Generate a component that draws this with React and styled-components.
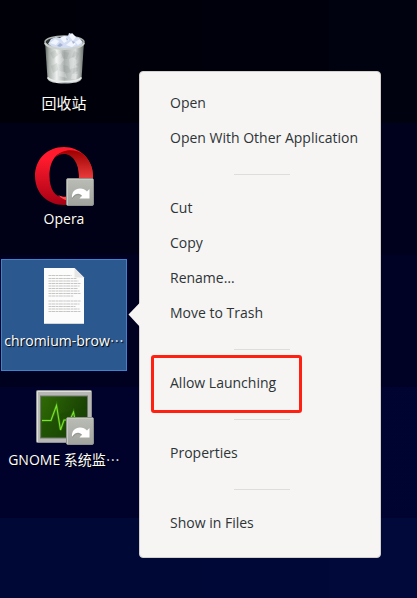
import React from "react";
import styled, { createGlobalStyle, css } from "styled-components";

const GlobalStyle = createGlobalStyle`
  *, *::before, *::after { box-sizing: border-box; }
  body { margin: 0; background: #000019; }
  button { font: inherit; }
`;

const Desktop = styled.main`
  position: relative;
  min-height: 100vh;
  padding: 21px 1px;
  font-family: "Open Sans", "Noto Sans CJK SC", sans-serif;
  font-size: 14px;
  line-height: 22px;
  background:
    linear-gradient(90deg, transparent 76px, #00004008 76px, #00004008 202px, #0000600c 202px, #0000600c 329px, #00146018 329px),
    linear-gradient(180deg, #000008 123px, #000016 123px, #000016 255px, #00001f 255px, #00001f 387px, #00022b 387px, #00022b 518px, #000835 518px);
`;

const IconColumn = styled.div`
  display: flex;
  flex-direction: column;
  gap: 7px;
  width: 126px;
`;

const Launcher = styled.button`
  display: flex;
  flex-direction: column;
  align-items: center;
  gap: ${(p) => (p.$tight ? 0 : 2)}px;
  height: 112px;
  padding: ${(p) => (p.$tight ? 3 : 4)}px 0 4px;
  border: 1px solid transparent;
  background: transparent;
  color: #fff;
  font-size: ${(p) => (p.$large ? 15 : 14)}px;
  text-shadow: 1px 1px 1px #000;
  white-space: nowrap;
  ${(p) =>
    p.$selected &&
    css`
      border-color: #3f82d0;
      background: #2c5890;
    `}
`;

const Art = styled.svg`
  display: block;
  flex: none;
  width: 64px;
  height: 64px;
`;

const Dots = styled.span`
  display: inline-block;
  font-family: "Noto Sans CJK SC", sans-serif;
  line-height: 1;
`;

const Menu = styled.div`
  position: absolute;
  top: 71px;
  left: 139px;
  display: flex;
  flex-direction: column;
  min-width: 242px;
  padding: 14px 0 16px;
  border: 1px solid #d3cfca;
  border-radius: 4px;
  background: #f6f5f4;
  color: #2e3436;
`;

const Pointer = styled.svg`
  position: absolute;
  top: 230px;
  left: -12px;
  width: 12px;
  height: 26px;
`;

const MenuItem = styled.button`
  position: relative;
  height: 35px;
  padding: 0 22px 2px 30px;
  border: 0;
  background: transparent;
  color: inherit;
  text-align: left;
  white-space: nowrap;
`;

const Divider = styled.div`
  display: flex;
  align-items: center;
  height: 35px;
  padding-top: 2px;
  padding-left: 94px;

  &::before {
    content: "";
    width: 56px;
    height: 1px;
    background: #dedddb;
  }
`;

const Highlight = styled.span`
  position: absolute;
  top: -11px;
  left: 11px;
  width: 151px;
  height: 58px;
  border: 3px solid #ff2012;
  border-radius: 3px;
`;

function ShortcutBadge() {
  return (
    <g>
      <rect x="34.5" y="34.5" width="27" height="27" rx="1.5" fill="url(#badge)" stroke="#8e918b" />
      <path d="M35.5 61V35.5H61" fill="none" stroke="#c6c9c2" />
      <path
        d="M40 54C39.500 48 43 44.500 48 44.500c3 0 5.200 1.200 7 3L57.500 45v9.500H47.500l2.500-3C46.500 48.500 42.500 49.500 40 54Z"
        fill="#fff"
      />
      <path d="M40.500 54.500C42.500 50.500 46.500 49.500 49.500 52" fill="none" stroke="#858881" strokeWidth="0.700" />
    </g>
  );
}

function TrashArt() {
  return (
    <Art viewBox="0 0 64 64" aria-hidden="true">
      <defs>
        <linearGradient id="tin">
          <stop offset="0" stopColor="#5d6560" />
          <stop offset="0.1" stopColor="#a9b0ac" />
          <stop offset="0.3" stopColor="#eef1ef" />
          <stop offset="0.5" stopColor="#a9b0ae" />
          <stop offset="0.78" stopColor="#d7dbda" />
          <stop offset="1" stopColor="#69716c" />
        </linearGradient>
      </defs>
      <path d="M13 16 15.500 53c1 3 8 4.500 17 4.500S49 56 49.500 53L52 16Z" fill="url(#tin)" />
      <path d="M15.500 51.500c2 3 9 4 17 4s15-1 17-4" fill="none" stroke="#e9ecea" strokeWidth="1.500" />
      <path d="m18 27 5-3 3 5-5 4Zm12-2 7 2-2 6-6-1Zm12 0 5 2-2 7-5-3ZM19 40l6-3 1 7-5 3Zm12-1 5 1 3 6-7 2Zm11 0 5-2-1 8-5 2Z" fill="#747d79" opacity="0.16" />
      <path d="m23 31 6-4 3 7-4 5-5-3Zm14 2 7-3-2 7 4 4-8 2Zm-10 12 6 1 2 6-8-2Zm13 3 6 0-2 5-5 0Z" fill="#fff" opacity="0.25" />
      <ellipse cx="32.500" cy="16" rx="19.500" ry="6" fill="#303733" stroke="#aeb5b1" strokeWidth="1.500" />
      <path d="m16 18 3-5 5-2 4 1 3-2 5 0 1-3 3 1 3 3 4 1 4 4-2 4-5 2-7 1-7-1-6 1Z" fill="#d3ddf2" />
      <path d="m18 17 5-4 4 2-3 4Zm10-5 5-2 4 4-5 3Zm9-2 3-3 4 4-3 4Zm-3 9 5-4 5 3-4 3Zm9-3 5-3 2 3-4 3Z" fill="#f1f5fd" />
      <path d="m28 17 3 2-3 2-3-1Zm12-2 3 1-2 2Zm-6-3 2 1-1 2Z" fill="#a3b3d4" />
      <path d="M13 17c1 3.500 9 6 19.500 6S51 20.500 52 17" fill="none" stroke="#cdd2cf" strokeWidth="2" />
    </Art>
  );
}

function OperaArt() {
  return (
    <Art viewBox="0 0 64 64" aria-hidden="true">
      <defs>
        <linearGradient id="operaRing" x2="0" y2="1">
          <stop offset="0.2" stopColor="#ff1b2d" />
          <stop offset="1" stopColor="#a70014" />
        </linearGradient>
        <linearGradient id="operaInner" x2="0" y2="1">
          <stop offset="0" stopColor="#9c0000" />
          <stop offset="0.7" stopColor="#ff4b4b" />
        </linearGradient>
        <linearGradient id="badge" x2="0" y2="1">
          <stop offset="0" stopColor="#babdb6" />
          <stop offset="1" stopColor="#a1a49e" />
        </linearGradient>
      </defs>
      <path
        fillRule="evenodd"
        d="M32 3C15 3 3 15.500 3 32s12 29 29 29 29-12.500 29-29S48 3 32 3ZM32.500 8.500C42 8.500 47 19 47 32s-5 21.500-14.500 21.500S17.500 45 17.500 32 23 8.500 32.500 8.500Z"
        fill="url(#operaRing)"
      />
      <path
        d="M22.700 13.500C30 4.500 43 4.500 51.300 10.300 57.500 15.900 61 23.600 61 32s-3.500 16.100-9.700 21.700c-9 5.500-19 4.300-25.500-2.900 11 6.500 21.200-3 21.200-18.800S36 3.500 22.700 13.500Z"
        fill="url(#operaInner)"
      />
      <ShortcutBadge />
    </Art>
  );
}

const paragraphRows = [
  [11.5, 23], [14.5, 28], [17, 30], [19.5, 32], [22, 31], [24.5, 29], [27, 31], [29.5, 32], [32, 25],
  [37, 32], [40, 31], [42.5, 27], [45, 31], [47.5, 32],
];

function DocumentArt() {
  return (
    <Art viewBox="0 0 64 64" aria-hidden="true">
      <path d="M12 4h30.500L52 13.500V60H12Z" fill="#fcfcfc" />
      <path d="M42.500 4v9.500H52Z" fill="#e6e6e4" />
      <path d="M12 59.500h40" stroke="#d3d6d2" />
      {paragraphRows.map(([y, width]) => (
        <path key={y} d={`M16.500 ${y}h${width}`} stroke="#bfc1be" strokeWidth="0.900" strokeDasharray="2.500 0.400 4 0.500" />
      ))}
    </Art>
  );
}

function MonitorArt() {
  return (
    <Art viewBox="0 0 64 64" aria-hidden="true">
      <defs>
        <linearGradient id="scope" x2="1" y2="0.400">
          <stop offset="0" stopColor="#2f6b05" />
          <stop offset="1" stopColor="#173e04" />
        </linearGradient>
      </defs>
      <rect x="4.500" y="7.500" width="55" height="52" rx="1" fill="#b7b8b6" stroke="#8f918e" />
      <path d="M5.500 59V8.500H59" fill="none" stroke="#dededd" />
      <rect x="8.500" y="13" width="47" height="42" fill="url(#scope)" stroke="#727670" />
      <path d="M10 40.500c12-9 28-14 45-15V54H10Z" fill="#1b4a04" opacity="0.45" />
      <path d="M10 37.500h9l5.500-15 4 24.500 3.500-10h6l3.500-8 1 5" fill="none" stroke="#3f9b12" strokeWidth="2.500" opacity="0.5" />
      <path d="M10 37.500h9l5.500-15 4 24.500 3.500-10h6l3.500-8 1 5" fill="none" stroke="#7ee02f" strokeWidth="1.100" />
      <ShortcutBadge />
    </Art>
  );
}

const launchers = [
  { name: "回收站", Picture: TrashArt, large: true },
  { name: "Opera", Picture: OperaArt, tight: true },
  { name: "chromium-brow", Picture: DocumentArt, cut: true, selected: true },
  { name: "GNOME 系统监", Picture: MonitorArt, cut: true },
];

const menuGroups = [
  ["Open", "Open With Other Application"],
  ["Cut", "Copy", "Rename…", "Move to Trash"],
  ["Allow Launching"],
  ["Properties"],
  ["Show in Files"],
];

export default function App() {
  return (
    <>
      <GlobalStyle />
      <Desktop>
        <IconColumn>
          {launchers.map(({ name, Picture, tight, large, cut, selected }) => (
            <Launcher key={name} type="button" $tight={tight} $large={large} $selected={selected}>
              <Picture />
              <span>
                {name}
                {cut && <Dots lang="zh-CN">…</Dots>}
              </span>
            </Launcher>
          ))}
        </IconColumn>
        <Menu role="menu">
          <Pointer viewBox="0 0 12 26" aria-hidden="true">
            <path d="M12 0.500 0.500 12.500 12 25Z" fill="#f6f5f4" />
          </Pointer>
          {menuGroups.map((items, index) => (
            <React.Fragment key={items[0]}>
              {index > 0 && <Divider role="separator" />}
              {items.map((label) => (
                <MenuItem key={label} type="button" role="menuitem">
                  {label}
                  {label === "Allow Launching" && <Highlight />}
                </MenuItem>
              ))}
            </React.Fragment>
          ))}
        </Menu>
      </Desktop>
    </>
  );
}
